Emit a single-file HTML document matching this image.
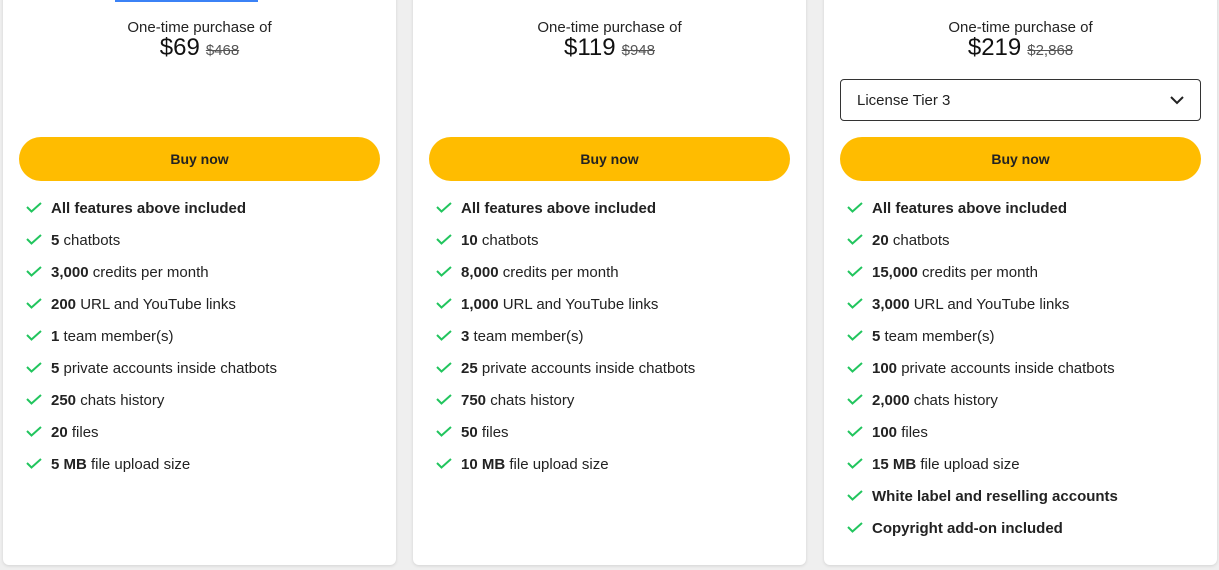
<!DOCTYPE html>
<html><head><style>
body{margin:0;width:1219px;height:570px;background:#efefef;font-family:"Liberation Sans",Arial,sans-serif;position:relative;overflow:hidden;color:#212121}
.card{position:absolute;top:-6px;height:571px;width:393px;background:#fff;border-radius:0 0 6px 6px;box-shadow:0 1px 3px rgba(0,0,0,.12)}
.ot{position:absolute;top:25px;left:0;right:0;text-align:center;font-size:15px;color:#222}
.pr{position:absolute;top:40px;left:0;right:0;text-align:center}
.pr b{font-weight:normal;font-size:24px;color:#111}
.pr s{font-size:15px;color:#555;margin-left:6px}
.btn{position:absolute;left:16px;right:16px;top:143px;height:44px;border-radius:22px;background:#ffbc00;text-align:center;line-height:45px;font-weight:bold;font-size:14px;color:#222}
ul{position:absolute;top:205px;left:21px;margin:0;padding:0;list-style:none}
li{height:32px;font-size:15px;color:#222;position:relative;padding-left:27px;line-height:20px}
li svg{position:absolute;left:2px;top:1px}
.sel{position:absolute;left:16px;right:16px;top:85px;height:42px;border:1px solid #333;border-radius:4px;box-sizing:border-box;font-size:15px;line-height:42px;padding-left:16px}
.sel svg{position:absolute;right:16px;top:15px}
</style></head><body>
<div style="position:absolute;left:115px;top:0;width:143px;height:2px;background:#3b82f6;z-index:2"></div>
<div class="card" style="left:3px">
<div class="ot">One-time purchase of</div><div class="pr"><b>$69</b><s>$468</s></div>
<div class="btn">Buy now</div>
<ul>
<li><svg width="16" height="14"><path d="M1 7l4.5 4.5L15 3" stroke="#22c55e" stroke-width="2" fill="none"/></svg><b>All features above included</b></li>
<li><svg width="16" height="14"><path d="M1 7l4.5 4.5L15 3" stroke="#22c55e" stroke-width="2" fill="none"/></svg><b>5</b> chatbots</li>
<li><svg width="16" height="14"><path d="M1 7l4.5 4.5L15 3" stroke="#22c55e" stroke-width="2" fill="none"/></svg><b>3,000</b> credits per month</li>
<li><svg width="16" height="14"><path d="M1 7l4.5 4.5L15 3" stroke="#22c55e" stroke-width="2" fill="none"/></svg><b>200</b> URL and YouTube links</li>
<li><svg width="16" height="14"><path d="M1 7l4.5 4.5L15 3" stroke="#22c55e" stroke-width="2" fill="none"/></svg><b>1</b> team member(s)</li>
<li><svg width="16" height="14"><path d="M1 7l4.5 4.5L15 3" stroke="#22c55e" stroke-width="2" fill="none"/></svg><b>5</b> private accounts inside chatbots</li>
<li><svg width="16" height="14"><path d="M1 7l4.5 4.5L15 3" stroke="#22c55e" stroke-width="2" fill="none"/></svg><b>250</b> chats history</li>
<li><svg width="16" height="14"><path d="M1 7l4.5 4.5L15 3" stroke="#22c55e" stroke-width="2" fill="none"/></svg><b>20</b> files</li>
<li><svg width="16" height="14"><path d="M1 7l4.5 4.5L15 3" stroke="#22c55e" stroke-width="2" fill="none"/></svg><b>5 MB</b> file upload size</li>
</ul></div>
<div class="card" style="left:413px">
<div class="ot">One-time purchase of</div><div class="pr"><b>$119</b><s>$948</s></div>
<div class="btn">Buy now</div>
<ul>
<li><svg width="16" height="14"><path d="M1 7l4.5 4.5L15 3" stroke="#22c55e" stroke-width="2" fill="none"/></svg><b>All features above included</b></li>
<li><svg width="16" height="14"><path d="M1 7l4.5 4.5L15 3" stroke="#22c55e" stroke-width="2" fill="none"/></svg><b>10</b> chatbots</li>
<li><svg width="16" height="14"><path d="M1 7l4.5 4.5L15 3" stroke="#22c55e" stroke-width="2" fill="none"/></svg><b>8,000</b> credits per month</li>
<li><svg width="16" height="14"><path d="M1 7l4.5 4.5L15 3" stroke="#22c55e" stroke-width="2" fill="none"/></svg><b>1,000</b> URL and YouTube links</li>
<li><svg width="16" height="14"><path d="M1 7l4.5 4.5L15 3" stroke="#22c55e" stroke-width="2" fill="none"/></svg><b>3</b> team member(s)</li>
<li><svg width="16" height="14"><path d="M1 7l4.5 4.5L15 3" stroke="#22c55e" stroke-width="2" fill="none"/></svg><b>25</b> private accounts inside chatbots</li>
<li><svg width="16" height="14"><path d="M1 7l4.5 4.5L15 3" stroke="#22c55e" stroke-width="2" fill="none"/></svg><b>750</b> chats history</li>
<li><svg width="16" height="14"><path d="M1 7l4.5 4.5L15 3" stroke="#22c55e" stroke-width="2" fill="none"/></svg><b>50</b> files</li>
<li><svg width="16" height="14"><path d="M1 7l4.5 4.5L15 3" stroke="#22c55e" stroke-width="2" fill="none"/></svg><b>10 MB</b> file upload size</li>
</ul></div>
<div class="card" style="left:824px">
<div class="ot">One-time purchase of</div><div class="pr"><b>$219</b><s>$2,868</s></div>
<div class="sel">License Tier 3<svg width="14" height="10"><path d="M1 2l6 6 6-6" stroke="#222" stroke-width="2" fill="none"/></svg></div>
<div class="btn">Buy now</div>
<ul>
<li><svg width="16" height="14"><path d="M1 7l4.5 4.5L15 3" stroke="#22c55e" stroke-width="2" fill="none"/></svg><b>All features above included</b></li>
<li><svg width="16" height="14"><path d="M1 7l4.5 4.5L15 3" stroke="#22c55e" stroke-width="2" fill="none"/></svg><b>20</b> chatbots</li>
<li><svg width="16" height="14"><path d="M1 7l4.5 4.5L15 3" stroke="#22c55e" stroke-width="2" fill="none"/></svg><b>15,000</b> credits per month</li>
<li><svg width="16" height="14"><path d="M1 7l4.5 4.5L15 3" stroke="#22c55e" stroke-width="2" fill="none"/></svg><b>3,000</b> URL and YouTube links</li>
<li><svg width="16" height="14"><path d="M1 7l4.5 4.5L15 3" stroke="#22c55e" stroke-width="2" fill="none"/></svg><b>5</b> team member(s)</li>
<li><svg width="16" height="14"><path d="M1 7l4.5 4.5L15 3" stroke="#22c55e" stroke-width="2" fill="none"/></svg><b>100</b> private accounts inside chatbots</li>
<li><svg width="16" height="14"><path d="M1 7l4.5 4.5L15 3" stroke="#22c55e" stroke-width="2" fill="none"/></svg><b>2,000</b> chats history</li>
<li><svg width="16" height="14"><path d="M1 7l4.5 4.5L15 3" stroke="#22c55e" stroke-width="2" fill="none"/></svg><b>100</b> files</li>
<li><svg width="16" height="14"><path d="M1 7l4.5 4.5L15 3" stroke="#22c55e" stroke-width="2" fill="none"/></svg><b>15 MB</b> file upload size</li>
<li><svg width="16" height="14"><path d="M1 7l4.5 4.5L15 3" stroke="#22c55e" stroke-width="2" fill="none"/></svg><b>White label and reselling accounts</b></li>
<li><svg width="16" height="14"><path d="M1 7l4.5 4.5L15 3" stroke="#22c55e" stroke-width="2" fill="none"/></svg><b>Copyright add-on included</b></li>
</ul></div>
</body></html>
